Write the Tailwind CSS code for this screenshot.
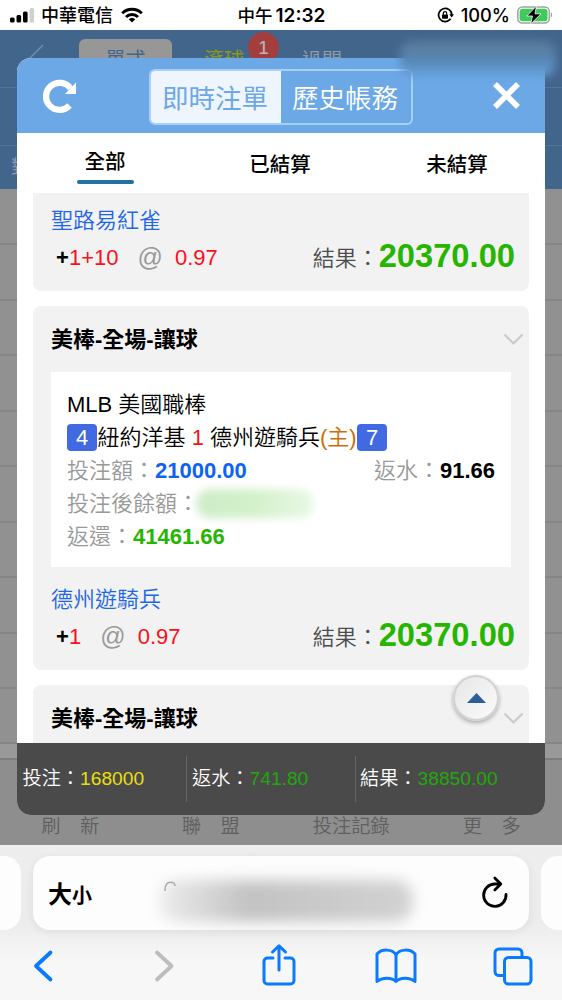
<!DOCTYPE html>
<html lang="zh-Hant">

<head>
    <meta charset="UTF-8">
    <title>即時注單</title>
    <meta name="viewport" content="width=device-width, initial-scale=1.0">
    <script src="https://cdn.jsdelivr.net/npm/@tailwindcss/browser@4"></script>
</head>

<body class="bg-white font-['Liberation_Sans','Noto_Sans_CJK_TC',sans-serif]">
    <div class="relative w-[562px] h-[1000px] overflow-hidden flex flex-col">

        <!-- status bar -->
        <div class="h-[30px] shrink-0 flex items-center justify-between pl-[9px] pr-[9px] text-[18px] leading-[30px] text-black font-['Inter','Noto_Sans_CJK_TC',sans-serif]">
            <div class="flex items-center w-[190px]">
                <svg class="w-[26px] h-[16px]" viewBox="0 0 26 16">
                    <rect x="1" y="10.5" width="4.6" height="5" rx="1.5" />
                    <rect x="7.5" y="8" width="4.6" height="7.500" rx="1.5" />
                    <rect x="14" y="4.500" width="4.600" height="11" rx="1.5" />
                    <rect x="20.500" y="1" width="4.600" height="14.500" rx="1.5" fill="#d0d0d0" />
                </svg>
                <span class="ml-[6px] pt-px font-medium">中華電信</span>
                <svg class="ml-2 w-[22px] h-[16px]" viewBox="0 0 22 16" fill="none" stroke="#000" stroke-width="3">
                    <path d="M1.200 6.200a14 14 0 0 1 19.600 0" />
                    <path d="M5 10a8.600 8.600 0 0 1 12 0" />
                    <path d="M11 15.600l-3.300-3.300a4.800 4.800 0 0 1 6.600 0z" fill="#000" stroke="none" />
                </svg>
            </div>
            <div class="flex whitespace-nowrap pt-px ml-px"><span class="font-medium mr-[3px] text-[17.500px]">中午</span><span class="font-semibold text-[19px]">12:32</span></div>
            <div class="flex items-center justify-end w-[190px]">
                <svg class="w-[17px] h-[17px]" viewBox="0 0 17 17" fill="none" stroke="#000" stroke-width="1.700">
                    <path d="M13.600 11.800A6.600 6.600 0 1 1 14.800 8" />
                    <path d="M12.300 7.300h4.700l-2.300 3.200z" fill="#000" stroke="none" />
                    <rect x="5" y="7.500" width="6" height="4.200" rx=".6" fill="#000" stroke="none" />
                    <path d="M6.300 7.800V6.300a1.700 1.700 0 0 1 3.400 0v1.500" stroke-width="1.200" />
                </svg>
                <span class="ml-[7px] font-medium text-[18.300px]">100%</span>
                <svg class="ml-[7px] w-[36px] h-[18px]" viewBox="0 0 36 18">
                    <rect x=".8" y="1" width="31.500" height="16" rx="4.500" fill="#fff" stroke="#a3a3a3" stroke-width="1.500" />
                    <rect x="2.600" y="2.800" width="27.900" height="12.400" rx="3" fill="#3ecb5b" />
                    <path d="M33.800 6.300c1.700.7 1.700 4.700 0 5.400z" fill="#a3a3a3" />
                    <path d="M19.500 0L9.800 10h5.700l-1.800 8L24 7.800h-6z" fill="#000" stroke="#fff" stroke-width=".8" />
                </svg>
            </div>
        </div>

        <!-- page behind the dialog -->
        <div class="relative h-[159px] shrink-0 bg-[#42658c] overflow-hidden">
            <div class="h-[58px] border-b border-[#52749a] flex pt-[9px]">
                <svg class="ml-[22px] w-[24px] h-[36px]" viewBox="0 0 24 36" fill="none" stroke="#6f8cab" stroke-width="1.500">
                    <path d="M21 6L6 21l15 14" />
                </svg>
                <div class="ml-[33px] w-[93px] h-[38px] rounded-md bg-[#979797] text-center text-[20px] leading-[42px] text-[#42658c]">單式</div>
                <div class="ml-[32px] w-[42px] text-[20px] leading-[42px] text-[#8c9a12]">滾球</div>
                <div class="ml-[56px] text-[20px] leading-[44px] text-[#8b9bac]">過關</div>
                <div class="absolute left-[248px] top-[2px] w-[31px] h-[31px] rounded-full bg-[#a33e3e] text-[#b9b9b9] text-center text-[19px] leading-[32px]">1</div>
            </div>
            <div class="h-[58px] border-b border-[#52749a]"></div>
            <div class="pl-[11px] text-[19px] leading-[44px] text-[#8b9bac]">對</div>
        </div>
        <div class="h-[555px] shrink-0 bg-[#919191] flex flex-col">
            <div class="h-[56px] border-b-2 border-[#868686]"></div>
            <div class="h-[55.500px] border-b-2 border-[#868686]"></div>
            <div class="h-[55.500px] border-b-2 border-[#868686]"></div>
            <div class="h-[55.500px] border-b-2 border-[#868686]"></div>
            <div class="h-[55.500px] border-b-2 border-[#868686]"></div>
            <div class="h-[55.500px] border-b-2 border-[#868686]"></div>
            <div class="h-[55.500px] border-b-2 border-[#868686]"></div>
            <div class="h-[55.500px] border-b-2 border-[#868686]"></div>
            <div class="h-[55.500px] border-b-2 border-[#868686]"></div>
            <div class="h-[55px] border-b-2 border-[#868686]"></div>
        </div>
        <div class="h-[16px] shrink-0 bg-[#999] border-b-2 border-[#7c7c7c]"></div>
        <div class="h-[85px] shrink-0 bg-[#8e8e8e] grid grid-cols-4 items-end pb-[4px] text-center text-[19.300px] leading-[28px] text-[#5f5f5f] font-[350]">
            <div>刷　新</div>
            <div>聯　盟</div>
            <div>投注記錄</div>
            <div>更　多</div>
        </div>

        <!-- browser toolbar -->
        <div class="h-[155px] shrink-0 bg-linear-to-b from-[#eeeeee] via-[#ececec] via-50% to-[#f7f7f7] to-75%">
            <div class="pt-[11px] flex">
                <div class="w-[21px] h-[74px] rounded-r-[17px] bg-[#fdfdfd]"></div>
                <div class="relative ml-[12px] w-[496px] h-[74px] rounded-[17px] bg-[#fdfdfd] shadow-[0_2px_10px_rgba(0,0,0,0.07)] flex items-center justify-between pl-[15px] pr-[21px]">
                    <div class="pt-[3px] font-bold text-black leading-none"><span class="text-[24px]">大</span><span class="text-[20px]">小</span></div>
                    <div class="absolute left-[126px] top-[24px] w-[254px] h-[42px] rounded-[18px] bg-linear-to-r from-[#ededed] via-[#c3c3c3] via-35% to-[#d2d2d2] blur-[7px]"></div>
                    <svg class="absolute left-[130px] top-[25px] w-[14px] h-[12px]" viewBox="0 0 14 12" fill="none" stroke="#aaa" stroke-width="1.500">
                        <path d="M2 10C2 4 4 1.200 7.500 1.200S12 3.500 12 5" />
                    </svg>
                    <svg class="w-[27px] h-[34px]" viewBox="0 0 27 34" fill="none" stroke="#000" stroke-width="2.800" stroke-linecap="round" stroke-linejoin="round">
                        <path d="M18.800 8H14A11.200 11.200 0 1 0 25 18.500" />
                        <path d="M13.800 2l6 6-6 6" />
                    </svg>
                </div>
                <div class="ml-[12px] w-[21px] h-[74px] rounded-l-[17px] bg-[#fdfdfd]"></div>
            </div>
            <div class="mt-[13px] pl-[32px] pr-[27px] flex items-center h-[46px]">
                <svg class="w-[22px] h-[34px]" viewBox="0 0 22 34" fill="none" stroke="#0a7aff" stroke-width="3.800" stroke-linecap="round" stroke-linejoin="round">
                    <path d="M18.500 3.500L4 17l14.500 13.500" />
                </svg>
                <svg class="ml-[99px] w-[22px] h-[34px]" viewBox="0 0 22 34" fill="none" stroke="#bdbdbd" stroke-width="3.800" stroke-linecap="round" stroke-linejoin="round">
                    <path d="M4 3.500L18.500 17 4 30.500" />
                </svg>
                <svg class="ml-[86px] mb-[3px] w-[36px] h-[44px]" viewBox="0 0 36 44" fill="none" stroke="#0a7aff" stroke-width="3" stroke-linecap="round" stroke-linejoin="round">
                    <path d="M12 15H6.500a3.500 3.500 0 0 0-3.500 3.500v19A3.500 3.500 0 0 0 6.500 41h23a3.500 3.500 0 0 0 3.500-3.500v-19a3.500 3.500 0 0 0-3.500-3.500H24" />
                    <path d="M18 27V3M11.500 9L18 2.800 24.500 9" />
                </svg>
                <svg class="ml-[78px] w-[42px] h-[36px]" viewBox="0 0 42 36" fill="none" stroke="#0a7aff" stroke-width="3" stroke-linejoin="round">
                    <path d="M21 6.500C17 1 7 .5 2 6v27.500c5-4.500 15-4.500 19 0 4-4.500 14-4.500 19 0V6C35 .5 25 1 21 6.500z" />
                    <path d="M21 6v27" />
                </svg>
                <svg class="ml-[76px] w-[40px] h-[39px]" viewBox="0 0 40 39" fill="none" stroke="#0a7aff" stroke-width="3" stroke-linejoin="round">
                    <rect x="11.500" y="10.500" width="26.500" height="26.500" rx="4" />
                    <path d="M11 28.500H6A4 4 0 0 1 2 24.500V6a4 4 0 0 1 4-4h19a4 4 0 0 1 4 4v4.500" />
                </svg>
            </div>
        </div>

        <!-- bet record dialog -->
        <div class="absolute left-[17px] top-[58px] w-[528px] h-[757px] rounded-[14px] bg-white overflow-hidden flex flex-col">
            <div class="h-[75px] shrink-0 bg-[#6ca8e6] flex items-center pl-[25px]">
                <svg class="w-[36px] h-[36px]" viewBox="0 0 36 36" fill="none" stroke="#fff" stroke-width="6.300">
                    <path d="M27.500 27.500A13.500 13.500 0 1 1 28.500 10.500" />
                    <path d="M34 4.500v11.500H23z" fill="#fff" stroke="none" />
                </svg>
                <div class="mt-[2px] ml-[71px] w-[264px] h-[56px] rounded-[6px] border-2 border-[#a5d0fa] flex overflow-hidden text-[26.500px] leading-[57px] text-center whitespace-nowrap">
                    <div class="w-[130px] pr-[2px] bg-[#eff5fd] text-[#6ca8e6]">即時注單</div>
                    <div class="flex-1 pr-[2px] text-white font-[350]">歷史帳務</div>
                </div>
                <svg class="ml-[80px] w-[27px] h-[27px]" viewBox="0 0 27 27" fill="none" stroke="#fff" stroke-width="5.600">
                    <path d="M2 2l23 23M25 2L2 25" />
                </svg>
            </div>

            <div class="h-[60px] shrink-0 grid grid-cols-3 text-center text-[20.500px] font-medium text-black">
                <div class="flex flex-col items-center pt-[13px]">
                    <div class="leading-[32px]">全部</div>
                    <div class="mt-[2px] w-[57px] h-[4px] rounded-full bg-[#2272a3]"></div>
                </div>
                <div class="leading-[63px] pr-[2px]">已結算</div>
                <div class="leading-[63px]">未結算</div>
            </div>

            <div class="h-[550px] shrink-0 overflow-hidden px-[16px] flex flex-col gap-[15px] text-[22px] leading-[33px]">
                <div class="h-[98px] shrink-0 rounded-b-lg bg-[#f2f2f2] px-[18px] pt-[11px]">
                    <div class="text-[#1f66e5] leading-[34px] font-[350]">聖路易紅雀</div>
                    <div class="flex justify-between items-center h-[38px] pl-[5px]">
                        <div class="flex items-center text-[#f9101c]"><span class="w-[13px] font-bold text-black">+</span>1+10<span class="ml-[19px] text-[25px] text-[#999]">@</span><span class="ml-[12px]">0.97</span></div>
                        <div class="flex items-center -mr-[4px] text-[#4c4c4c] font-[350]"><span class="pt-[2px]">結果：</span><span class="-mt-[3px] font-bold text-[32.700px] text-[#26b500]">20370.00</span></div>
                    </div>
                </div>

                <div class="h-[364px] shrink-0 rounded-lg bg-[#f2f2f2] px-[18px]">
                    <div class="h-[66px] flex items-center justify-between">
                        <div class="font-bold text-black">美棒-全場-讓球</div>
                        <svg class="-mr-[13px] w-[21px] h-[13px]" viewBox="0 0 21 13" fill="none" stroke="#cbcbcb" stroke-width="2.200"><path d="M1.500 1.500l9 9 9-9" /></svg>
                    </div>
                    <div class="h-[195px] bg-white px-[16px] pt-[16px] whitespace-nowrap">
                        <div class="text-black font-[350]">MLB 美國職棒</div>
                        <div class="flex items-center text-black font-[350]">
                            <span class="w-[30px] h-[27px] rounded-[4px] bg-[#4169e1] text-white text-center leading-[27px]">4</span>
                            <span class="ml-[.5px]">紐約洋基 <span class="text-[#f9101c]">1</span> 德州遊騎兵<span class="text-[#cc6d0a]">(主)</span></span>
                            <span class="ml-[.5px] w-[30px] h-[27px] rounded-[4px] bg-[#4169e1] text-white text-center leading-[27px]">7</span>
                        </div>
                        <div class="flex justify-between text-[#999] font-[350]">
                            <div>投注額：<span class="font-bold text-[#0d63f3]">21000.00</span></div>
                            <div>返水：<span class="font-bold text-black">91.66</span></div>
                        </div>
                        <div class="flex items-center text-[#999] font-[350]">投注後餘額：<span class="-ml-[3px] w-[118px] h-[29px] rounded-full bg-linear-to-r from-[#cdecc7] via-[#d3f1ca] to-[#e9f8e5] blur-[4px]"></span></div>
                        <div class="text-[#999] font-[350]">返還：<span class="font-bold text-[#26b500]">41461.66</span></div>
                    </div>
                    <div class="pt-[16px]">
                        <div class="text-[#1f66e5] leading-[34px] font-[350]">德州遊騎兵</div>
                        <div class="flex justify-between items-center h-[38px] pl-[5px]">
                            <div class="flex items-center text-[#f9101c]"><span class="w-[13px] font-bold text-black">+</span>1<span class="ml-[19px] text-[25px] text-[#999]">@</span><span class="ml-[12px]">0.97</span></div>
                            <div class="flex items-center -mr-[4px] text-[#4c4c4c] font-[350]"><span class="pt-[2px]">結果：</span><span class="-mt-[3px] font-bold text-[32.700px] text-[#26b500]">20370.00</span></div>
                        </div>
                    </div>
                </div>

                <div class="h-[100px] shrink-0 rounded-lg bg-[#f2f2f2] px-[18px]">
                    <div class="h-[66px] flex items-center justify-between">
                        <div class="font-bold text-black">美棒-全場-讓球</div>
                        <svg class="-mr-[13px] w-[21px] h-[13px]" viewBox="0 0 21 13" fill="none" stroke="#cbcbcb" stroke-width="2.200"><path d="M1.500 1.500l9 9 9-9" /></svg>
                    </div>
                </div>
            </div>

            <div class="h-[72px] shrink-0 bg-[#4a4a4a] flex items-center text-[19.200px] leading-[46px] text-white font-[350] whitespace-nowrap">
                <div class="w-[169px] pl-[5.500px]">投注：<span class="text-[#eadf0b]">168000</span></div>
                <div class="w-[169px] pl-[5px] border-l border-[#666]">返水：<span class="text-[#22a80a]">741.80</span></div>
                <div class="flex-1 pl-[4px] border-l border-[#666]">結果：<span class="text-[#22a80a]">38850.00</span></div>
            </div>
        </div>

        <!-- back to top -->
        <div class="absolute left-[453px] top-[675px] w-[46px] h-[46px] rounded-full border-2 border-[#d2d2d2] bg-linear-to-br from-[#e6e6e6] to-[#fbfbfb] shadow-[0_2px_4px_rgba(0,0,0,0.3)] flex items-center justify-center">
            <svg class="w-[19px] h-[10px]" viewBox="0 0 19 10" fill="#2c5d98"><path d="M9.500 0L19 10H0z" /></svg>
        </div>

        <!-- smudge over the account name -->
        <div class="absolute left-[400px] top-[41px] w-[156px] h-[35px] rounded-[12px] bg-linear-to-b from-[#5c7c98] via-[#5585b0] to-[#66a1dd] blur-[5px]"></div>
    </div>
</body>

</html>
